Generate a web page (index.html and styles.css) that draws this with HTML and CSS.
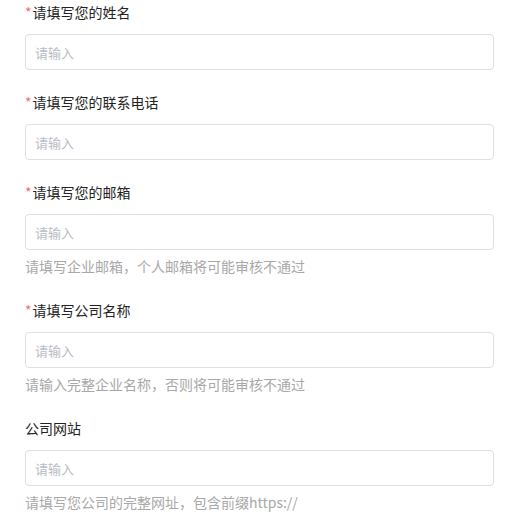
FILE: index.html
```html
<!DOCTYPE html>
<html lang="zh-CN">
<head>
    <meta charset="UTF-8">
    <meta name="viewport" content="width=device-width, initial-scale=1.0">
    <title>企业信息</title>
    <link rel="stylesheet" href="styles.css">
</head>
<body>
    <form class="apply-form">
        <div class="form-item">
            <label class="form-label required" for="name">请填写您的姓名</label>
            <input class="form-input" type="text" id="name" placeholder="请输入">
        </div>
        <div class="form-item">
            <label class="form-label required" for="phone">请填写您的联系电话</label>
            <input class="form-input" type="text" id="phone" placeholder="请输入">
        </div>
        <div class="form-item">
            <label class="form-label required" for="email">请填写您的邮箱</label>
            <input class="form-input" type="text" id="email" placeholder="请输入">
            <div class="form-tip">请填写企业邮箱，个人邮箱将可能审核不通过</div>
        </div>
        <div class="form-item">
            <label class="form-label required" for="company">请填写公司名称</label>
            <input class="form-input" type="text" id="company" placeholder="请输入">
            <div class="form-tip">请输入完整企业名称，否则将可能审核不通过</div>
        </div>
        <div class="form-item">
            <label class="form-label" for="website">公司网站</label>
            <input class="form-input" type="text" id="website" placeholder="请输入">
            <div class="form-tip">请填写您公司的完整网址，包含前缀https://</div>
        </div>
    </form>
</body>
</html>
```

FILE: styles.css
```css
body {
    margin: 0;
    padding: 0;
    background: #fff;
    font-family: "Noto Sans CJK SC", "Liberation Sans", sans-serif;
}
.apply-form {
    width: 469px;
    padding: 1px 0 0 25px;
}
.form-item {
    margin-bottom: 21px;
}
.form-label {
    display: block;
    font-size: 14px;
    line-height: 22px;
    color: #222;
    margin-bottom: 11px;
}
.form-label.required::before {
    content: "*";
    color: #f56c6c;
    margin-right: 1px;
}
.form-input {
    display: block;
    width: 100%;
    height: 36px;
    padding: 0 9px;
    border: 1px solid #dcdfe6;
    border-radius: 4px;
    box-sizing: border-box;
    font-family: inherit;
    font-size: 13px;
    color: #333;
    outline: none;
}
.form-input::placeholder {
    color: #b8bcc4;
}
.form-tip {
    font-size: 14px;
    line-height: 22px;
    color: #a8a8a8;
    margin-top: 5px;
    margin-bottom: 22px;
}
```
